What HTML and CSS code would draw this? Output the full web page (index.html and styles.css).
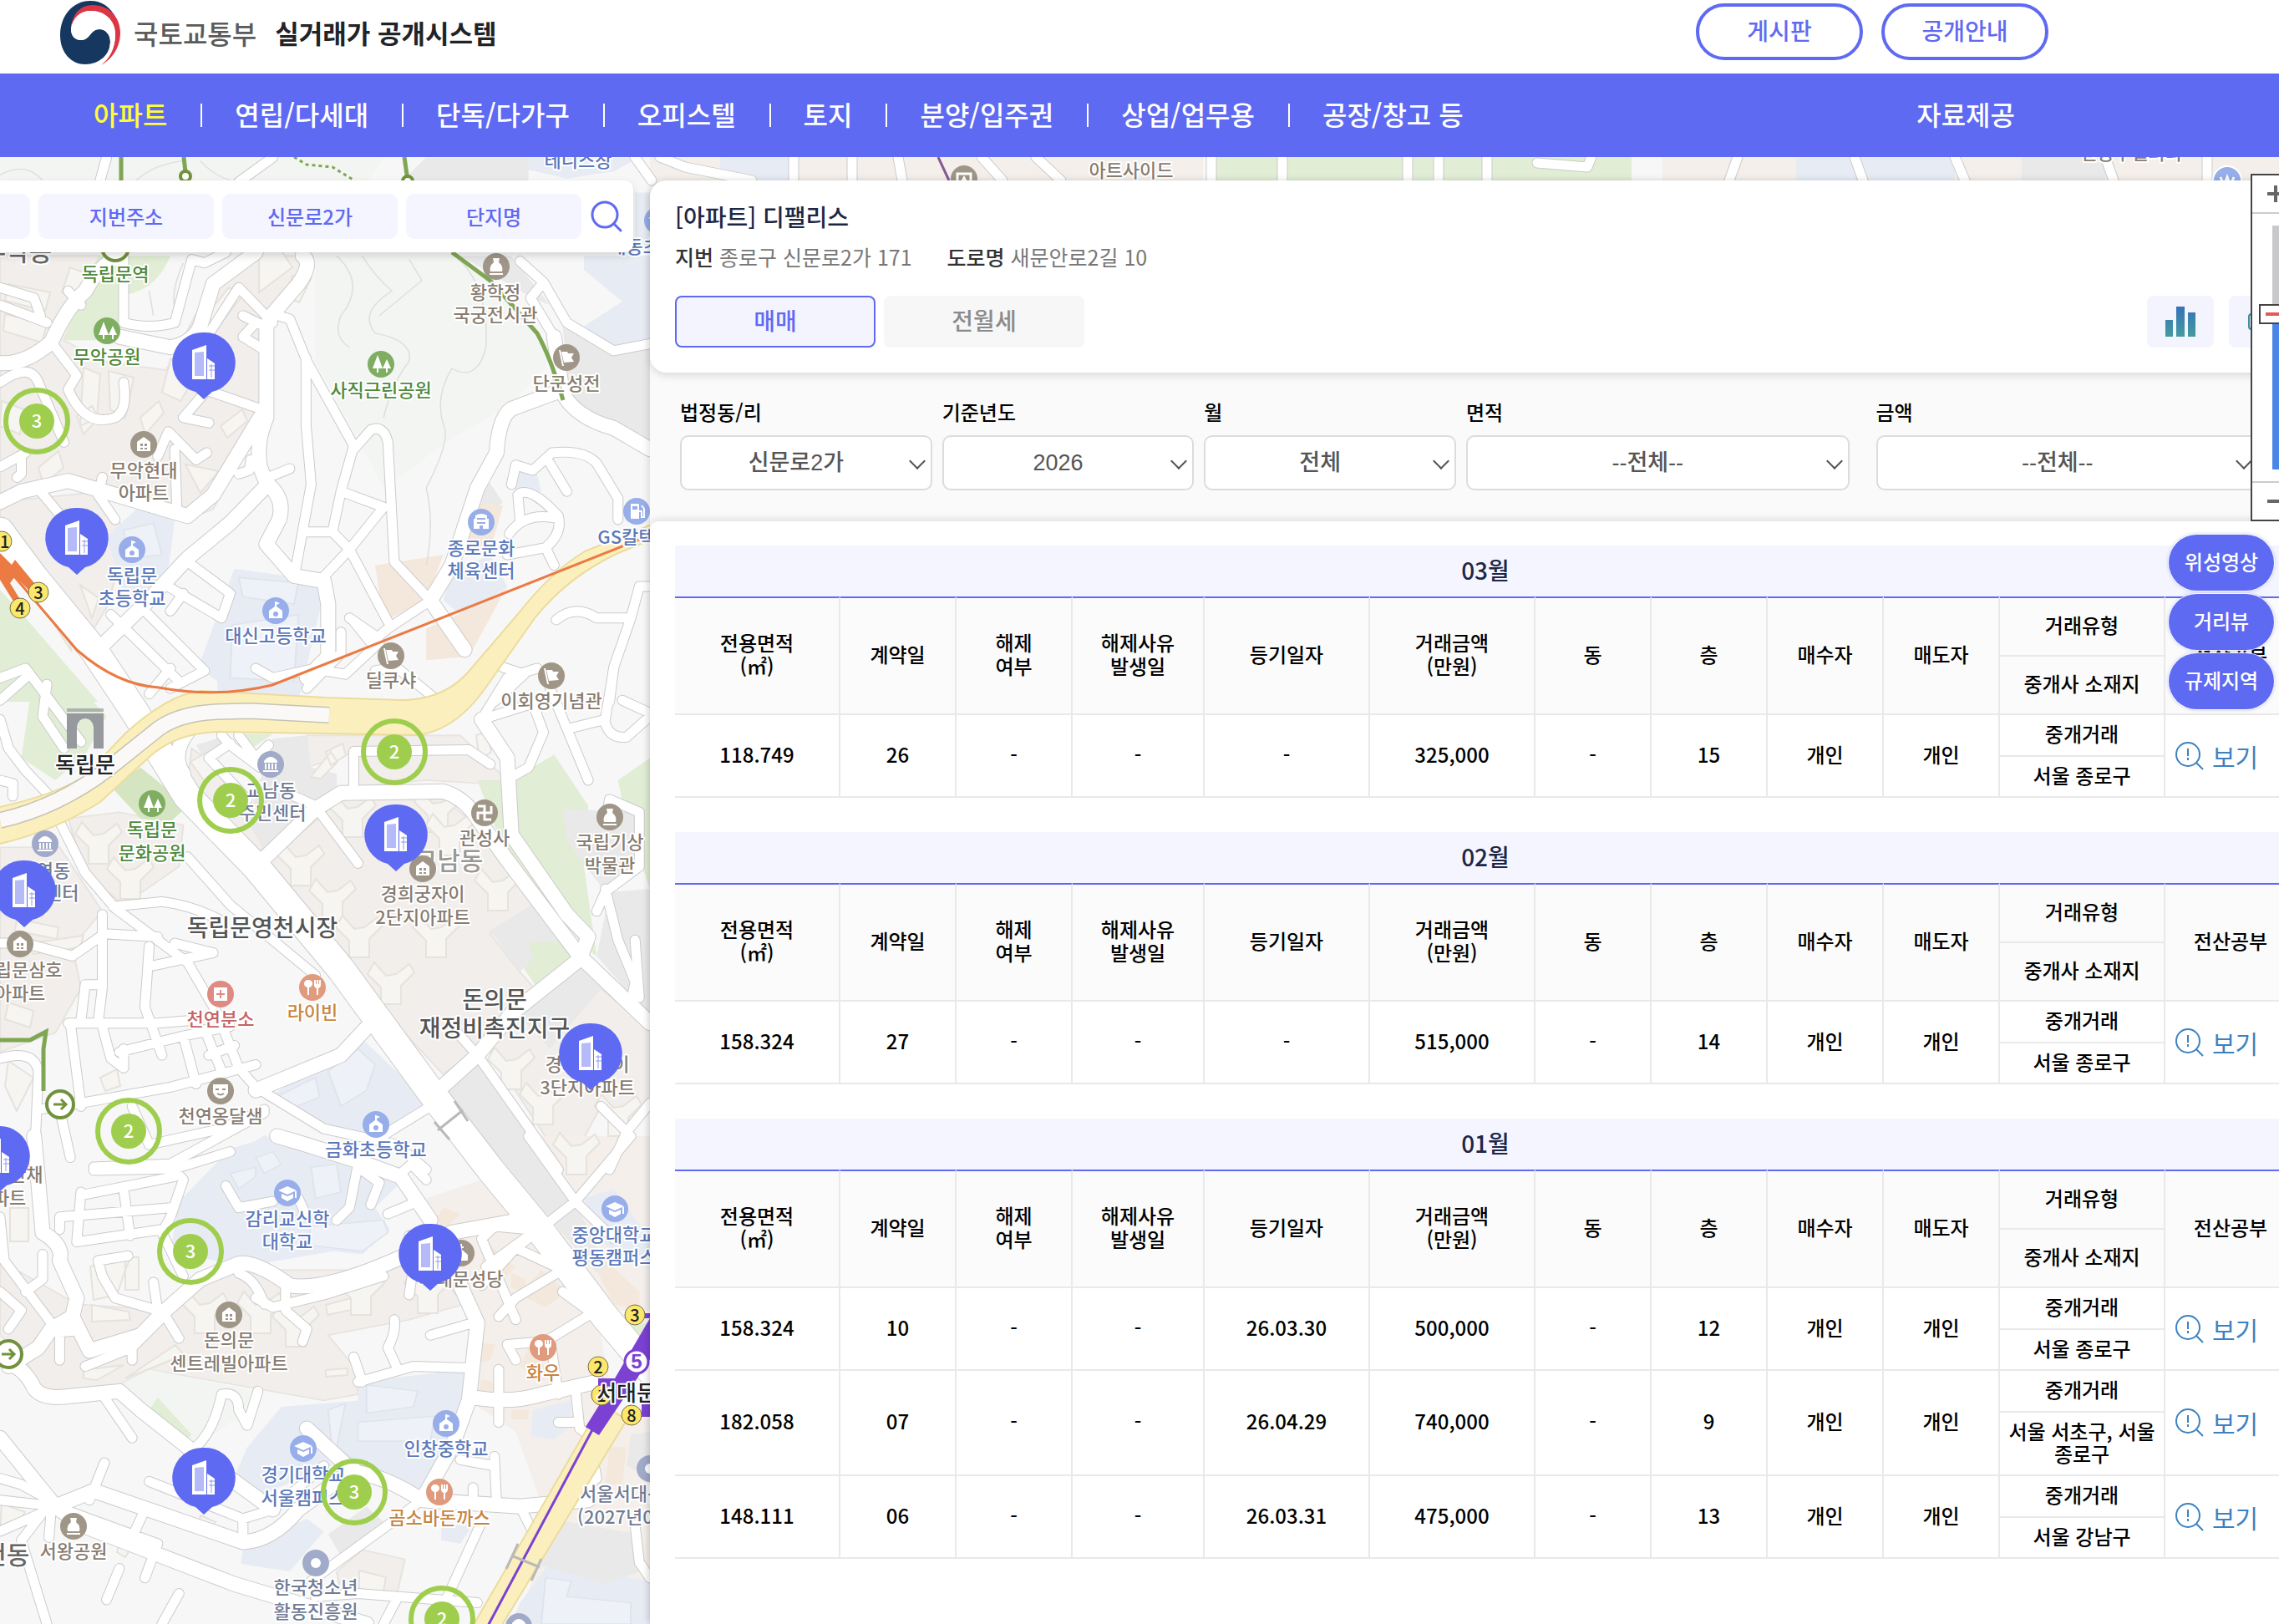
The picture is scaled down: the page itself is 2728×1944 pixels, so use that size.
FILE: index.html
```html
<!DOCTYPE html>
<html lang="ko">
<head>
<meta charset="utf-8">
<title>국토교통부 실거래가 공개시스템</title>
<link rel="stylesheet" href="styles.css">
</head>
<body>
<header class="top">
  <a class="brand" href="#">
    <svg class="brand-mark" viewBox="0 0 72 80" aria-hidden="true">
      <path fill="#163860" d="M67 23C60 9 50 2 36 2 15 2 0 20 0 43c0 22 14 35 30 35 17 0 30-12 30-27 0-9-6-15-13-15-11 0-11 13-22 13-8 0-12-6-12-13 0-12 10-25 25-27 14-1 22 5 29 14z"/>
      <path fill="#dc3545" d="M13 36C14 18 24 7 39 7 59 7 72 22 72 40 72 58 62 72 49 79 59 71 66 60 66 42 66 25 53 14 37 14 24 14 15 22 13 36Z"/>
      <path fill="#fff" d="M13 36C15 22 24 14 37 14 53 14 66 25 66 42 66 52 63 61 58 67L60 51C60 42 54 36 47 36 36 36 36 49 25 49 17 49 13 43 13 36Z"/>
    </svg>
    <span class="brand-org">국토교통부</span>
    <strong class="brand-name">실거래가 공개시스템</strong>
  </a>
  <div class="top-actions">
    <button class="outline-btn" type="button">게시판</button>
    <button class="outline-btn" type="button">공개안내</button>
  </div>
</header>
<nav class="gnb">
  <ul class="gnb-list">
    <li><a class="on" href="#">아파트</a></li>
    <li><a href="#">연립/다세대</a></li>
    <li><a href="#">단독/다가구</a></li>
    <li><a href="#">오피스텔</a></li>
    <li><a href="#">토지</a></li>
    <li><a href="#">분양/입주권</a></li>
    <li><a href="#">상업/업무용</a></li>
    <li><a href="#">공장/창고 등</a></li>
  </ul>
  <a class="gnb-data" href="#">자료제공</a>
</nav>

<main class="stage">
<svg class="map" viewBox="0 188 2728 1756" preserveAspectRatio="xMinYMin slice" role="img" aria-label="지도">
  <defs>
    <g id="streets">
      <g transform="translate(0 180) scale(.5102 .4209)">
        <path d="M250 20 235 85M640 20 560 90M640 465 680 480 720 600 830 840 800 970 780 1085M718 590V780L730 950 690 1215M830 850 870 795Q900 780 910 830L925 1170 1010 1280M800 970 900 1015 820 1135 750 1225M710 1085H780L820 1135 910 1340M1010 1280 910 1360 870 1400 830 1340M1220 315 1275 375 1330 490 1440 570 1525 550M1275 375 1245 420 1300 530M1200 950 1210 895 1250 910 1295 860Q1370 850 1400 890L1450 990V1050M1290 890 1330 970M1220 975Q1250 960 1310 1040 1320 1090 1280 1130L1190 1150M1215 980 1220 1050M1195 1090Q1230 1030 1300 1045M1280 1130 1300 1180M1305 1335Q1350 1290 1400 1330H1480L1500 1240H1525M1480 1330 1440 1470 1430 1568"/>
        <path d="M120 545 180 640 160 680Q200 790 270 760 300 740 290 660M0 660Q70 600 90 660L150 830M0 440 110 490M0 390 80 420 95 470M160 400 190 440M290 300V490Q350 510 410 490L450 310 480 320 530 290M640 490 560 390 480 540M570 470 620 500M600 490 570 530 610 560M480 680 610 735M480 690 430 760 490 775M0 900 60 860M50 870 50 920 40 930M240 930 230 980 270 1050M95 970 150 1050M370 870 395 800 460 880 485 860M410 850 415 1020M560 920 585 910 588 880M630 930 680 905M440 1170 540 1260 520 1330 380 1230M430 1260 400 1310M260 1320 420 1510M340 1310 480 1480 400 1530M800 1370V1430L720 1530M820 1330 880 1380M1180 1470 1230 1490 1160 1568M760 1480 810 1490 890 1400M880 1480 930 1470 1030 1568"/>
      </g>
      <g transform="translate(0 800) scale(.5102 .3827)">
        <path d="M0 160 20 250 60 320 110 390 140 480 200 640 270 750 440 920 510 1080 560 1250 600 1310 760 1440 930 1490 1000 1568M440 590 540 740 740 960M265 745 380 730Q450 740 520 790M830 380V260L1100 255 1150 300M750 450 840 610M690 400 740 430M520 210 540 240 610 310M540 235 490 280 580 410M560 210 600 280 630 240M1060 1120 1120 1210 1310 1568M1130 160 1250 110 1275 200 1240 310 1200 340M1290 60 1380 350M1330 190 1420 160 1440 0M1420 170Q1430 220 1470 215L1525 150M1460 100 1525 140M1430 410 1500 450V620L1420 700 1400 760M1430 410 1420 480M1420 690 1450 850 1490 980 1480 1050M1490 850 1500 1030M175 895 245 830 370 840M240 770V1000L230 1110M170 900 60 860H0M350 870 340 1060 380 1210M360 930 500 890 410 860M160 1110H370L460 1100M165 1110 190 1370M190 1100 200 990H240M190 1360 400 1310 600 1240M280 1200 430 1150 540 1120M290 1190V1250L260 1220 240 1120M430 1150 460 1300M480 1130 520 1260M490 1210 550 1180"/>
        <path d="M0 1220Q80 1190 90 1260L80 1568M140 1380 165 1530M90 1380 190 1360M310 1370 350 1490 520 1440 620 1380M220 1560 400 1550 620 1390M1010 1370 900 1460M1410 1370 1470 1450 1525 1360M1470 1450 1430 1568M0 30 60 0M110 50 100 150 150 250M60 0 190 230M0 100 60 30M1130 160 1190 30 1260 0M0 350 30 360V400M400 0 350 80M600 0 640 30 740 0"/>
      </g>
      <g transform="translate(0 1360) scale(.5102 .3724)">
        <path d="M220 110 410 105 540 50M410 110 430 140 400 260 380 310M190 190 410 130M190 180 180 340 380 300M140 300V260L400 230M290 170 305 320M600 520 640 550 760 510 900 450M670 490V560L720 620 710 660M560 440Q600 460 620 540M380 560 420 650M0 260 10 400 120 600M100 380V460L60 500M0 500 50 560 20 620M300 385 230 400 240 450 270 520 370 560M360 470 370 560M380 310 430 450M245 840 310 970M450 1010Q500 960 520 830 560 820 560 880L580 930 605 820M350 1110 570 1230 640 1200 760 1060M570 1230V1300M0 1100 50 1120 130 1180M0 1170 130 1190 370 1310M245 1050 210 1170M120 1200 115 1290M0 1270 100 1210M340 1200 310 1290M370 1310 340 1420M280 1390 250 1490M100 1210 50 1300 110 1568M420 1470 380 1568M140 720V630L190 625M200 740 310 680 390 570M310 660V720"/>
        <path d="M980 1180 890 1270 730 1430M840 790 970 740 1100 745M830 710 850 790M925 590Q930 630 910 680L930 740M1010 640 1110 600M740 1480 840 1470 1120 1500M1050 1480 1130 1240M900 1568 930 1490M840 90 820 230 790 270M840 100 890 150 870 220M940 120 965 90 1000 140M910 250 980 210M530 160 560 230 640 210M700 200 720 260M1240 0 1350 210 1440 330M1350 210 1480 0M1350 210 1210 360 1130 480M1240 300 1160 290 1130 330 1210 590M1170 580 1210 520 1320 430M1140 420 1240 320M1210 360 1320 430M1400 560 1280 660 1190 670 1210 720M1380 560 1320 500M1290 650 1310 830M1170 750V920M1350 810 1360 940 1390 970M1350 920H1310M1160 1030 1165 1180M1080 1040 1160 1060M1110 1130V1180M1220 1190 1260 1300M1380 960 1400 1100 1330 1180M1490 1250 1500 1370 1525 1420M960 320 970 420 960 510"/>
      </g>
      <path d="M760 188 780 216M790 188 820 200 900 216M950 188V216M1020 188V216M1075 188 1080 216M1175 188 1200 216M1240 188 1270 216M1450 188V216M1535 188V216M1685 188V216M1722 188V216M1780 188V216M1840 195 1900 200 1905 188M2080 188 2070 216M2220 188 2230 216M2340 188 2352 216M2520 188 2530 216M2642 188V216"/>
    </g>
    <g id="roads">
      <g transform="translate(0 180) scale(.5102 .4209)">
        <path d="M710 300Q735 320 700 380L640 465 625 500V760Q600 830 610 900L625 945Q670 990 655 1050L625 1120 690 1210 760 1225 770 1290V1440L720 1500M1300 690 1200 735Q1170 760 1165 860L1120 960 1060 1180 1010 1280 1090 1420M1300 530 1320 690Q1350 760 1440 790L1525 850M0 605Q60 610 120 545 160 440 200 400 230 330 280 300M280 530 400 560Q450 550 470 500L500 380 600 290M0 1000 50 970 160 940 440 1040 500 980 610 760M230 1420 340 1290 440 1160 540 1060 620 960"/>
      </g>
      <g transform="translate(0 800) scale(.5102 .3827)">
        <path d="M440 200Q400 270 430 330M600 620 740 440 800 390 1040 385Q1080 400 1110 450L1190 600 1360 900 1525 1110M1020 1330 1120 1210 1200 1080 1360 910 1380 840 1330 770 1200 520 1190 280 1130 160M600 1320 800 1210 870 1110"/>
      </g>
      <g transform="translate(0 1360) scale(.5102 .3724)">
        <path d="M80 0 90 150 100 310Q150 350 140 400L180 520 170 580 120 620 90 680 20 740M170 580 210 690 330 640 380 570 470 460 560 410Q600 400 680 480 760 500 940 390L1060 310 1220 270M20 730Q60 750 80 810 100 850 170 835L280 820 330 880 450 1010 640 1200M0 970 130 1190 220 1140 570 1305Q640 1300 700 1200L830 1070M130 1190 190 1250 550 1440 860 1568M720 940 830 1080Q900 1090 990 1170L1220 1190 1380 1170M990 1170 1060 1000 1100 850 1120 600 1080 480M1110 840Q1200 860 1270 830L1400 790M650 0 700 20 840 80 940 130 1010 270"/>
      </g>
    </g>
    <g id="avenues">
      <path d="M0 636 40 690 112 778 160 850 224 953 306 1037 408 1160 520 1313 587 1400 643 1468 724 1576 778 1640"/>
    </g>
    <path id="tower" d="M-20-26-6-10 6-12 22-24 28-14 12 2 12 24-12 24-12 4-28-12Z"/>
    <g id="poi-tree"><circle r="16" fill="#7fae62"/><path fill="#fff" d="M-4-11-10 5H-5V10H-3V5H2ZM7-6 2 5H6V10H8V5H12Z"/></g>
    <g id="poi-flag"><circle r="16" fill="#9f9687"/><path fill="#fff" d="M-9-9H-7L-3 10H-5ZM-6-7 1-7 2-5 9-5 6 0 9 5-3 6Z"/></g>
    <g id="poi-house"><circle r="16" fill="#9f9687"/><path fill="#fff" d="M0-9 8-3V8H-8V-3Z"/><path fill="#9f9687" d="M-4-1H-1V2H-4ZM1-1H4V2H1ZM-4 4H-1V6H-4ZM1 4H4V6H1Z"/></g>
    <g id="poi-vase"><circle r="16" fill="#9f9687"/><path fill="#fff" d="M-4-10H4L3-5Q9 0 7 6H-7Q-9 0-3-5ZM-8 8H8V10H-8Z"/></g>
    <g id="poi-school"><circle r="16" fill="#98aeea"/><path fill="#fff" d="M0-11 5-9 1-7V-5L8 0V9H-8V0L-1-5V-11Z"/><circle cy="4" r="3" fill="#98aeea"/></g>
    <g id="poi-cap"><circle r="16" fill="#98aeea"/><path fill="#fff" d="M0-8 11-3 0 2-11-3ZM-7 1 0 4 7 1V6L0 10-7 6ZM9-2H11V6H9Z"/></g>
    <g id="poi-hall"><circle r="16" fill="#a1abc9"/><path fill="#fff" d="M-8-4Q0-14 8-4V-2H-8ZM-7-1H-5V6H-7ZM-3-1H-1V6H-3ZM1-1H3V6H1ZM5-1H7V6H5ZM-9 7H9V9H-9Z"/></g>
    <g id="poi-food"><circle r="16" fill="#e09a7d"/><path fill="#fff" d="M-5-9A4 4 0 0 1-4 0V9H-6V0A4 4 0 0 1-5-9ZM2-9H4V-4H5V-9H7V-4H8V-9H10V-2Q9 1 7 1V9H5V1Q3 1 2-2Z"/></g>
    <g id="poi-plus"><circle r="16" fill="#dd8b83"/><path fill="#fff" d="M-8-8H8V8H-8Z"/><path fill="#dd8b83" d="M-1-5H1V-1H5V1H1V5H-1V1H-5V-1H-1Z"/></g>
    <g id="poi-mask"><circle r="16" fill="#9f9687"/><path fill="#fff" d="M-9-8H9V2Q6 9 0 9-6 9-9 2Z"/><path fill="none" stroke="#9f9687" stroke-width="2" d="M-6-2H-2M2-2H6M-4 3Q0 6 4 3"/></g>
    <g id="poi-fuel"><circle r="16" fill="#98aeea"/><path fill="#fff" d="M-7-9H3V9H-7Z"/><path fill="#98aeea" d="M-5-6H1V-2H-5Z"/><path fill="none" stroke="#fff" stroke-width="2" d="M3 0H6V7H9V-3L6-7"/></g>
    <g id="poi-sport"><circle r="16" fill="#98aeea"/><path fill="#fff" d="M-7-8Q0-12 7-8V-4H9V8H-9V-4H-7Z"/><path fill="#98aeea" d="M-5-5H5V-3H-5ZM-5 0H5V2H-5ZM-2 4H2V8H-2Z"/></g>
    <g id="poi-dot"><circle r="16" fill="#a1abc9"/><circle r="6" fill="#fff"/></g>
    <g id="poi-church"><circle r="16" fill="#9f9687"/><path fill="#fff" d="M-1-11H1V-8H3V-6H1V-4L8 2V9H-8V2L-1-4V-6H-3V-8H-1Z"/></g>
    <g id="poi-temple"><circle r="16" fill="#9f9687"/><path fill="none" stroke="#fff" stroke-width="3" d="M-8-8H0V8H8M8-8V0H-8V8"/></g>
    <g id="arrow-stop"><circle r="16" fill="#fff" stroke="#71913c" stroke-width="4"/><path fill="none" stroke="#71913c" stroke-width="3" d="M-8 0H7M1-6 7 0 1 6"/></g>
    <g id="pin">
      <path fill="#5f6af2" d="M0-36A36 36 0 0 1 10 35L0 44-10 35A36 36 0 0 1 0-36Z"/>
      <path fill="#fff" d="M-14-15 3-21V20H-14Z"/><path fill="#b5baf9" d="M-11-12 0-13V16H-11Z"/>
      <path fill="#fff" d="M4-5 13 1V20H4Z"/><path stroke="#8f97f6" d="M6 4H13M6 9H13M9 2V18"/>
    </g>
    <g id="cluster"><circle r="37" fill="none" stroke="#9fce4e" stroke-width="6"/><circle r="21" fill="#9fce4e"/></g>
  </defs>

  <rect y="188" width="2728" height="1756" fill="#f7f7f7"/>
  <g transform="translate(0 180) scale(.5102 .4209)">
    <path class="forest" d="M0 20H900L860 90H0ZM740 300H1080L1200 420 1290 600 1200 720 1060 820 900 960 830 800 740 600Z"/>
    <path class="estate" d="M0 300H240L150 540 240 600 390 625 480 420 560 300H710L730 360 640 470 620 760 500 1020 440 1050 160 940 0 980ZM0 1000 240 970 300 1100 250 1300 200 1400 0 1130Z"/>
    <path class="park" d="M230 300H400Q370 390 300 410V490L240 540H150L180 450ZM0 1250 60 1330 230 1568H0Z"/>
    <path class="campus" d="M1240 20H1500L1440 60 1330 80 1220 50ZM250 1100 320 1020 410 1050 400 1150 380 1280 290 1260ZM550 1190 730 1220 760 1260 700 1568H510V1510L465 1470ZM1370 300H1525V540L1450 570 1370 500 1460 430 1370 340ZM1490 120H1525V290H1490ZM1060 1200 1150 1150 1190 1240 1090 1330 1040 1280ZM1200 910 1260 920 1270 970 1210 980Z"/>
    <path class="campus-light" d="M545 1350 700 1320 690 1510 540 1500ZM560 1215 700 1230 690 1290 570 1270ZM290 1080 360 1060 380 1150 300 1160Z"/>
    <path class="block" d="M1000 20H1240V90H940ZM1080 300H1200L1290 440 1250 420ZM1320 500 1440 570 1525 560V850L1340 720ZM1140 930 1180 1000 1120 1060Z"/>
    <path class="shops" d="M880 1180 1040 1150 1000 1280 900 1340ZM1100 1000 1180 1010 1150 1140 1090 1150ZM1000 1360 1150 1280 1190 1240 1100 1440 1000 1450Z"/>
    <path class="contour" d="M790 300Q860 380 800 470 780 530 820 560M850 300Q880 360 920 400 840 460 880 520 970 540 960 600 920 660 900 760M1060 290Q1150 380 1140 560 1120 660 1060 620 1020 700 1040 780 1060 820 1000 960 1020 1060 1000 1180M960 310 990 370 890 470M350 400 360 470M430 320Q400 400 410 450M0 70Q60 30 100 85M320 85Q360 40 430 30M470 30Q500 70 540 85"/>
  </g>
  <g transform="translate(0 800) scale(.5102 .3827)">
    <path class="estate" d="M160 470 280 450 430 490 420 620 290 740 200 640ZM630 600 800 410H1040L1100 470 1260 730 1150 830 1220 950 1260 1010 1130 1180 1040 1270 800 930ZM720 210H1080L1190 350 1130 360 1000 350 840 370V260L720 310ZM1200 1090 1390 980 1525 1130V1350L1470 1440 1410 1370 1330 1568 1150 1200ZM0 560H140L240 760 170 870 190 1000 130 1140 0 1200ZM450 250 500 300 620 560 590 590 440 350Z"/>
    <path class="park" d="M0 0H150L250 150 200 270 130 350 50 280 70 100ZM1120 350H1200L1300 270 1380 430 1370 620 1400 900 1370 870 1180 560ZM1450 350 1525 280V690L1470 480ZM1240 850 1350 840 1360 910 1260 1000 1230 940ZM560 205H640L580 260Z"/>
    <path class="garden" d="M260 370 330 310 440 430 400 480 330 470Z"/>
    <path class="block" d="M1150 820 1260 730 1350 850 1240 860 1250 910 1220 950ZM640 220 720 210 730 310 790 330V390L740 430 620 560 580 480ZM1210 1070 1370 920 1430 970 1290 1190ZM1430 700 1525 690V1090L1400 900ZM1050 1280 1120 1220 1300 1568H1160L1030 1330ZM1320 440 1500 450 1490 640 1420 700 1330 540ZM460 240 520 215 540 250 480 290Z"/>
    <path class="campus" d="M620 1350 850 1160 1010 1360 900 1480 780 1450ZM500 1568 620 1460 760 1568Z"/>
    <path class="campus-light" d="M650 1340 740 1280 750 1340 680 1380ZM770 1260 840 1190 880 1240 860 1320 800 1370Z"/>
  </g>
  <g transform="translate(0 1360) scale(.5102 .3724)">
    <path class="estate" d="M0 400 180 540 380 560 480 450 600 430 900 430 1000 400 1090 540 960 590 770 640 830 740 840 830 760 850 350 750 280 800 100 820 60 720 0 640ZM850 1330 950 1360 930 1480 800 1470 790 1400Z"/>
    <path class="beige" d="M1000 200 1150 130 1240 280 1400 570 1430 790 1110 850 1120 600 1060 440ZM1110 860 1430 800 1380 960 1270 1180 1210 950ZM1380 960 1525 900V1568H1210ZM1260 0H1525V560L1440 560 1240 200Z"/>
    <path class="shops" d="M1040 230 1080 250 1050 290 1020 270ZM1150 350 1210 420 1180 460 1130 400ZM1270 430 1330 500 1280 550 1220 510ZM1200 440 1230 460 1240 500 1200 490ZM1110 660 1160 670 1150 720 1110 730ZM1240 680 1290 760 1270 790 1220 740ZM1370 350 1420 400 1500 500V560L1440 540ZM1130 780 1180 800 1160 850 1120 840ZM1430 1000 1470 1000 1460 1120 1420 1120ZM1340 1290 1440 1320 1390 1390 1320 1350ZM1200 880H1240V910H1200Z"/>
    <path class="campus" d="M640 0 840 90 940 150 880 230 915 300 850 380 780 370 570 420 400 370 420 210 540 40ZM840 790 1090 750V830L1050 1010 980 1160 860 1080 720 940 780 1060 580 1170 545 1110 580 1000 660 870 840 850ZM570 1320 720 1230 760 1270 680 1400 565 1375ZM1370 200 1440 170 1525 330V430L1420 350ZM1220 1500 1290 1370 1525 1430V1568H1200ZM1035 1250H1110L1080 1310 1035 1300ZM1250 880 1340 850V930L1300 975 1245 965Z"/>
    <path class="campus-light" d="M600 70 640 50 660 90 620 120ZM730 100 790 90 800 180 740 200ZM540 120 600 100 600 130 560 170ZM730 290 900 270 910 310 850 370 720 350ZM860 800 980 820 970 870 860 890ZM770 880 810 860 790 1000 830 1040 780 1020ZM840 920 1020 900 1010 980 840 980ZM1280 1420 1340 1430 1330 1480 1480 1500V1568H1270Z"/>
    <path class="forest" d="M280 800 350 750 600 820 560 900 450 1010Z"/>
    <path class="park" d="M370 840 450 960 430 985 350 880ZM1480 610 1520 600 1500 660Z"/>
    <path class="block" d="M770 1280 860 1190 900 1240 800 1350ZM1290 1230 1500 1280V1400L1420 1440 1270 1380ZM1480 960 1525 950V1100L1470 1060ZM1130 0H1230L1360 240 1420 420 1400 440 1200 120Z"/>
  </g>
  <path class="beige" d="M778 188H1440V216H778ZM1990 188H2728V216H1990Z"/>
  <path class="campus" d="M862 188H945V216H862ZM2150 188H2340V216H2150Z"/>
  <path class="block" d="M2420 188H2520V216H2420Z"/>
  <path class="park" d="M1456 188H1953V216H1456Z"/>
  <g class="bldg">
    <use href="#tower" x="118" y="1010"/><use href="#tower" x="156" y="1052"/><use href="#tower" x="360" y="1036"/><use href="#tower" x="422" y="978"/><use href="#tower" x="524" y="972"/><use href="#tower" x="398" y="1078"/><use href="#tower" x="430" y="1122"/><use href="#tower" x="522" y="1122"/><use href="#tower" x="596" y="1066"/><use href="#tower" x="468" y="1178"/><use href="#tower" x="538" y="1000"/><use href="#tower" x="612" y="1280"/><use href="#tower" x="650" y="1322"/><use href="#tower" x="690" y="1382"/><use href="#tower" x="740" y="1336"/><use href="#tower" x="245" y="1572"/><use href="#tower" x="312" y="1572"/><use href="#tower" x="354" y="1588"/><use href="#tower" x="432" y="1550"/><use href="#tower" x="512" y="1548"/>
    <path d="M10 340 60 350 54 372 6 360ZM84 320 110 330 96 360 74 350ZM6 376 56 388 50 410 4 396ZM310 300 330 290 350 320 310 350ZM350 330 372 334 358 362 344 356ZM100 440 120 448 116 500 96 510ZM130 444 160 452 150 500 132 490ZM92 498 110 486 118 500 100 520ZM204 430 240 440 216 480 194 470ZM168 500 190 480 196 494 174 520ZM264 510 290 490 296 504 272 524ZM222 556 262 564 240 590ZM240 386 274 344 290 354 252 404ZM46 560 70 540 76 560 52 580ZM2 480 28 490 24 520 0 510ZM48 690 70 720 86 780 60 740ZM96 700 118 716 110 740ZM20 1100 70 1110 68 1124 18 1114ZM30 1130 100 1120 96 1134 40 1142ZM10 1200 40 1210 36 1230 6 1220ZM10 1270 40 1290 20 1330 6 1300ZM120 1290 140 1280 144 1300 126 1306ZM390 900 410 890 414 904 396 916ZM570 880 584 876 588 900 574 910ZM228 912 248 900 262 920 244 934ZM108 1516 156 1506 150 1520 140 1550 112 1556ZM12 1446H34V1486H12ZM110 1562 154 1570 156 1580 110 1582ZM180 1630 210 1610 220 1622 150 1650ZM100 1640 148 1634 116 1652 100 1650ZM150 1505H166V1544H150ZM390 1562 420 1554V1568L392 1574ZM390 1640 416 1638V1646L390 1648ZM2 1800 30 1810 20 1826 0 1830ZM240 1814 258 1822 252 1832 238 1826ZM144 1844 158 1850 150 1864 140 1858ZM430 1880 462 1888 458 1910 430 1902ZM372 930 396 900 404 912 384 932Z"/>
  </g>

  <use href="#streets" class="casing casing-s"/><use href="#roads" class="casing casing-m"/><use href="#avenues" class="casing casing-l"/>
  <use href="#streets" class="lane lane-s"/><use href="#roads" class="lane lane-m"/><use href="#avenues" class="lane lane-l"/>

  <path class="arterial" d="M790 624 700 660Q660 684 620 735L560 805Q530 838 480 838L390 835 300 830 240 827Q200 832 150 878L100 930Q60 954-10 968V1012Q60 998 120 960L180 905Q210 878 260 876L390 878 500 880Q545 874 580 825L640 740Q680 690 740 662L790 642Z"/>
  <path class="tunnel-edge" d="M0 982Q70 966 130 920L190 872Q215 854 260 852L300 851 394 856"/>
  <path class="tunnel" d="M0 982Q70 966 130 920L190 872Q215 854 260 852L300 851 394 856"/>
  <path class="arterial" d="M720 1680 750 1700 598 1950H564Z"/>

  <path class="rail" d="M0 670 92 778Q140 820 190 823 260 836 326 820L790 636"/>
  <path fill="#eb7a43" d="M0 662 14 676 18 670 46 704 40 712 18 690 12 698 28 724 20 726 0 694Z"/>
  <path class="trail" d="M145 188V216M220 188 222 206M484 188 488 216M541 302 587 336 643 399Q660 430 674 479M0 1245H36L55 1235 52 1256V1306"/>
  <path class="trail-dots" d="M352 188 367 197 398 200 424 216"/>
  <g fill="#fff" stroke="#71913c" stroke-width="4"><circle cx="222" cy="211" r="6"/><circle cx="488" cy="217" r="6"/><circle cx="138" cy="296" r="16"/></g>
  <path stroke="#7b41d3" stroke-width="3" d="M712 1706 582 1950"/>
  <path fill="#7b41d3" d="M701 1708 717 1718 778 1627V1578L736 1650 716 1650V1658L731 1660ZM772 1572H778V1578H772ZM768 1680H778V1696H768Z"/>
  <path stroke="#b9b9b9" stroke-width="3" d="M520 1343 538 1364M524 1353 554 1329M544 1318 560 1342M606 1878 620 1848M612 1862 646 1876M636 1892 648 1866"/>
  <path stroke="#835a94" stroke-width="3" d="M1123 188 1136 216"/>
  <circle cx="1154" cy="214" r="16" fill="#9f9687"/><path fill="none" stroke="#fff" stroke-width="3" d="M1146 222V208H1162V222M1150 220 1154 213 1158 220"/>
  <circle cx="2666" cy="216" r="17" fill="#98aeea" stroke="#fff" stroke-width="2"/><path fill="none" stroke="#fff" stroke-width="3" d="M2658 212 2662 222 2666 212 2670 222 2674 212"/>
  <g transform="translate(102 872)" fill="#969a9f"><path d="M-22-18H22V24H10V-2Q8-12 0-12-8-12-10-2V24H-22Z"/><path d="M-22-24H22V-20H-22Z" opacity=".7"/></g>

  <g class="poi">
    <use href="#poi-tree" x="128" y="396"/><use href="#poi-tree" x="456" y="436"/><use href="#poi-tree" x="182" y="962"/>
    <use href="#poi-vase" x="594" y="319"/><use href="#poi-vase" x="730" y="978"/><use href="#poi-vase" x="88" y="1827"/>
    <use href="#poi-flag" x="678" y="428"/><use href="#poi-flag" x="468" y="785"/><use href="#poi-flag" x="660" y="809"/>
    <use href="#poi-house" x="172" y="532"/><use href="#poi-house" x="24" y="1130"/><use href="#poi-house" x="274" y="1574"/>
    <use href="#poi-sport" x="576" y="625"/><use href="#poi-fuel" x="762" y="612"/><use href="#poi-cap" x="787" y="264"/>
    <use href="#poi-school" x="158" y="658"/><use href="#poi-school" x="330" y="731"/><use href="#poi-school" x="450" y="1346"/><use href="#poi-school" x="534" y="1704"/>
    <use href="#poi-cap" x="344" y="1428"/><use href="#poi-cap" x="736" y="1447"/><use href="#poi-cap" x="363" y="1734"/>
    <use href="#poi-hall" x="324" y="915"/><use href="#poi-hall" x="54" y="1010"/>
    <use href="#poi-plus" x="264" y="1190"/><use href="#poi-mask" x="264" y="1306"/><use href="#poi-church" x="552" y="1500"/><use href="#poi-temple" x="580" y="973"/>
    <use href="#poi-food" x="374" y="1182"/><use href="#poi-food" x="650" y="1613"/><use href="#poi-food" x="526" y="1786"/>
    <use href="#poi-dot" x="378" y="1871"/><use href="#poi-dot" x="778" y="1758"/><use href="#poi-hall" x="621" y="1947"/>
  </g>
  <use href="#arrow-stop" x="72" y="1322"/><use href="#arrow-stop" x="10" y="1621"/>

  <g class="label">
    <g class="green"><text x="138" y="336">독립문역</text><text x="128" y="435">무악공원</text><text x="456" y="475">사직근린공원</text><text x="182" y="1001">독립문</text><text x="182" y="1029">문화공원</text></g>
    <g class="brown">
      <text x="172" y="571">무악현대</text><text x="172" y="598">아파트</text><text x="593" y="358">황학정</text><text x="593" y="385">국궁전시관</text><text x="678" y="467">단군성전</text>
      <text x="468" y="822">딜쿠샤</text><text x="660" y="847">이회영기념관</text><text x="580" y="1011">관성사</text><text x="730" y="1016">국립기상</text><text x="730" y="1044">박물관</text>
      <text x="24" y="1169">독립문삼호</text><text x="24" y="1197">아파트</text><text x="264" y="1344">천연옹달샘</text>
      <text x="703" y="1282">경희궁자이</text><text x="703" y="1310">3단지아파트</text><text x="1" y="1414">천연뜨란채</text><text x="1" y="1442">아파트</text>
      <text x="552" y="1539">서대문성당</text><text x="274" y="1612">돈의문</text><text x="274" y="1640">센트레빌아파트</text><text x="88" y="1865">서왕공원</text><text x="1354" y="212">아트사이드</text><text x="2551" y="191">인동주갤러리</text>
    </g>
    <g class="blue">
      <text x="692" y="200">테니스장</text><text x="790" y="303">매동초등학교</text><text x="576" y="664">종로문화</text><text x="576" y="691">체육센터</text><text x="760" y="651">GS칼텍스</text><text x="158" y="697">독립문</text><text x="158" y="724">초등학교</text><text x="330" y="769">대신고등학교</text>
      <text x="450" y="1384">금화초등학교</text><text x="344" y="1467">감리교신학</text><text x="344" y="1494">대학교</text><text x="735" y="1486">중앙대학교</text><text x="735" y="1513">평동캠퍼스</text><text x="534" y="1742">인창중학교</text><text x="363" y="1773">경기대학교</text><text x="363" y="1801">서울캠퍼스</text>
    </g>
    <g class="slate"><text x="324" y="954">교남동</text><text x="326" y="981">주민센터</text><text x="54" y="1050">천연동</text><text x="54" y="1077">주민센터</text><text x="378" y="1908">한국청소년</text><text x="378" y="1937">활동진흥원</text><text x="775" y="1796">서울서대문우체국</text><text x="777" y="1824">(2027년01월예정)</text></g>
    <g class="orange"><text x="374" y="1220">라이빈</text><text x="650" y="1651">화우</text><text x="526" y="1825">곰소바돈까스</text></g>
    <text class="red" x="264" y="1228">천연분소</text>
    <g class="district"><text class="faded" x="537" y="1041">교남동</text><text x="21" y="312">무악동</text><text x="-6" y="1872">냉천동</text></g>
    <g class="place"><text x="314" y="1121">독립문영천시장</text><text x="592" y="1207">돈의문</text><text x="592" y="1241">재정비촉진지구</text></g>
    <use href="#poi-house" x="506" y="1040"/>
    <g class="brown"><text x="506" y="1078">경희궁자이</text><text x="506" y="1106">2단지아파트</text></g>
    <text class="station" x="102" y="925">독립문</text>
  </g>
  <g class="exit">
    <circle cx="2" cy="648" r="12"/><circle cx="46" cy="709" r="12"/><circle cx="24" cy="728" r="12"/><circle cx="760" cy="1574" r="12"/><circle cx="716" cy="1636" r="12"/><circle cx="720" cy="1670" r="12"/><circle cx="756" cy="1694" r="12"/>
    <text x="2" y="656">-1</text><text x="46" y="717">3</text><text x="24" y="736">4</text><text x="760" y="1582">3</text><text x="716" y="1644">2</text><text x="720" y="1678">1</text><text x="756" y="1702">8</text>
  </g>
  <circle cx="762" cy="1630" r="14" fill="#fff" stroke="#7b41d3" stroke-width="3"/>
  <text class="line-no" x="762" y="1638">5</text>
  <g class="label"><text class="station" x="762" y="1677">서대문역</text></g>

  <g class="clusters">
    <use href="#cluster" x="44" y="504"/><use href="#cluster" x="276" y="958"/><use href="#cluster" x="472" y="900"/><use href="#cluster" x="154" y="1354"/><use href="#cluster" x="228" y="1498"/><use href="#cluster" x="424" y="1786"/><use href="#cluster" x="529" y="1938"/>
    <text x="44" y="512">3</text><text x="276" y="966">2</text><text x="472" y="908">2</text><text x="154" y="1362">2</text><text x="228" y="1506">3</text><text x="424" y="1794">3</text><text x="529" y="1946">2</text>
  </g>
  <use href="#pin" x="244" y="434"/><use href="#pin" x="92" y="644"/><use href="#pin" x="474" y="999"/><use href="#pin" x="29" y="1066"/><use href="#pin" x="707" y="1261"/><use href="#pin" x="-2" y="1384"/><use href="#pin" x="515" y="1501"/><use href="#pin" x="244" y="1769"/>
</svg>

<aside class="side">
  <form class="search">
    <button class="chip" type="button" aria-label="시도"></button>
    <button class="chip" type="button">지번주소</button>
    <button class="chip" type="button">신문로2가</button>
    <button class="chip" type="button">단지명</button>
    <button class="search-go" type="submit" aria-label="검색">
      <svg viewBox="0 0 40 40" width="40" height="40"><g fill="none" stroke="#5f6af2" stroke-width="3" stroke-linecap="round"><circle cx="18" cy="18" r="15"/><path d="M29 29 37 37"/></g></svg>
    </button>
  </form>
</aside>

<section class="panel">
  <header class="info">
    <h1 class="info-title">[아파트] 디팰리스</h1>
    <p class="info-addr"><span><b>지번</b> 종로구 신문로2가 171</span><span><b>도로명</b> 새문안로2길 10</span></p>
    <div class="info-row">
      <div class="tabs">
        <button class="tab on" type="button">매매</button>
        <button class="tab" type="button">전월세</button>
      </div>
      <div class="tools">
        <button class="tool" type="button" aria-label="그래프">
          <svg viewBox="0 0 80 62" width="80" height="62"><defs><linearGradient id="teal" x1="0" y1="0" x2="0" y2="1"><stop offset="0" stop-color="#3572b9"/><stop offset="1" stop-color="#469b9d"/></linearGradient></defs><path fill="url(#teal)" d="M22 29H31V49H22ZM35 13H45V49H35ZM49 20H58V49H49Z"/></svg>
        </button>
        <button class="tool" type="button" aria-label="인쇄">
          <svg viewBox="0 0 80 62" width="80" height="62"><g fill="none" stroke="#3c8fa8" stroke-width="2"><rect x="24" y="22" width="32" height="18" rx="3"/><path d="M30 22V14H50V22M30 34H50V48H30Z"/></g></svg>
        </button>
      </div>
    </div>
  </header>

  <form class="filters">
    <div class="field"><label for="dong">법정동/리</label><div class="select"><select id="dong"><option>신문로2가</option></select></div></div>
    <div class="field"><label for="year">기준년도</label><div class="select"><select id="year"><option>2026</option></select></div></div>
    <div class="field"><label for="month">월</label><div class="select"><select id="month"><option>전체</option></select></div></div>
    <div class="field wide"><label for="area">면적</label><div class="select"><select id="area"><option>--전체--</option></select></div></div>
    <div class="field wide last"><label for="price">금액</label><div class="select"><select id="price"><option>--전체--</option></select></div></div>
  </form>

  <div class="results">
    <svg width="0" height="0" class="sprite" aria-hidden="true"><symbol id="look" viewBox="0 0 34 34"><g fill="none" stroke="#3c82c0" stroke-width="2"><circle cx="15" cy="15" r="14"/><path d="M25 25 33 33M15 8V17M15 19V22"/></g></symbol></svg>
    <table class="deals">
      <caption>03월</caption>
      <colgroup><col class="w-l"><col class="w-s"><col class="w-s"><col class="w-m"><col class="w-l"><col class="w-l"><col class="w-s"><col class="w-s"><col class="w-s"><col class="w-s"><col class="w-l"><col></colgroup>
      <thead>
        <tr><th rowspan="2">전용면적<br>(㎡)</th><th rowspan="2">계약일</th><th rowspan="2">해제<br>여부</th><th rowspan="2">해제사유<br>발생일</th><th rowspan="2">등기일자</th><th rowspan="2">거래금액<br>(만원)</th><th rowspan="2">동</th><th rowspan="2">층</th><th rowspan="2">매수자</th><th rowspan="2">매도자</th><th>거래유형</th><th rowspan="2">전산공부</th></tr>
        <tr><th class="sub">중개사 소재지</th></tr>
      </thead>
      <tbody>
        <tr><td rowspan="2">118.749</td><td rowspan="2">26</td><td rowspan="2">-</td><td rowspan="2">-</td><td rowspan="2">-</td><td rowspan="2">325,000</td><td rowspan="2">-</td><td rowspan="2">15</td><td rowspan="2">개인</td><td rowspan="2">개인</td><td>중개거래</td><td rowspan="2"><a class="view" href="#"><svg width="34" height="34"><use href="#look"/></svg>보기</a></td></tr>
        <tr><td>서울 종로구</td></tr>
      </tbody>
    </table>
    <table class="deals">
      <caption>02월</caption>
      <colgroup><col class="w-l"><col class="w-s"><col class="w-s"><col class="w-m"><col class="w-l"><col class="w-l"><col class="w-s"><col class="w-s"><col class="w-s"><col class="w-s"><col class="w-l"><col></colgroup>
      <thead>
        <tr><th rowspan="2">전용면적<br>(㎡)</th><th rowspan="2">계약일</th><th rowspan="2">해제<br>여부</th><th rowspan="2">해제사유<br>발생일</th><th rowspan="2">등기일자</th><th rowspan="2">거래금액<br>(만원)</th><th rowspan="2">동</th><th rowspan="2">층</th><th rowspan="2">매수자</th><th rowspan="2">매도자</th><th>거래유형</th><th rowspan="2">전산공부</th></tr>
        <tr><th class="sub">중개사 소재지</th></tr>
      </thead>
      <tbody>
        <tr><td rowspan="2">158.324</td><td rowspan="2">27</td><td rowspan="2">-</td><td rowspan="2">-</td><td rowspan="2">-</td><td rowspan="2">515,000</td><td rowspan="2">-</td><td rowspan="2">14</td><td rowspan="2">개인</td><td rowspan="2">개인</td><td>중개거래</td><td rowspan="2"><a class="view" href="#"><svg width="34" height="34"><use href="#look"/></svg>보기</a></td></tr>
        <tr><td>서울 종로구</td></tr>
      </tbody>
    </table>
    <table class="deals">
      <caption>01월</caption>
      <colgroup><col class="w-l"><col class="w-s"><col class="w-s"><col class="w-m"><col class="w-l"><col class="w-l"><col class="w-s"><col class="w-s"><col class="w-s"><col class="w-s"><col class="w-l"><col></colgroup>
      <thead>
        <tr><th rowspan="2">전용면적<br>(㎡)</th><th rowspan="2">계약일</th><th rowspan="2">해제<br>여부</th><th rowspan="2">해제사유<br>발생일</th><th rowspan="2">등기일자</th><th rowspan="2">거래금액<br>(만원)</th><th rowspan="2">동</th><th rowspan="2">층</th><th rowspan="2">매수자</th><th rowspan="2">매도자</th><th>거래유형</th><th rowspan="2">전산공부</th></tr>
        <tr><th class="sub">중개사 소재지</th></tr>
      </thead>
      <tbody>
        <tr><td rowspan="2">158.324</td><td rowspan="2">10</td><td rowspan="2">-</td><td rowspan="2">-</td><td rowspan="2">26.03.30</td><td rowspan="2">500,000</td><td rowspan="2">-</td><td rowspan="2">12</td><td rowspan="2">개인</td><td rowspan="2">개인</td><td>중개거래</td><td rowspan="2"><a class="view" href="#"><svg width="34" height="34"><use href="#look"/></svg>보기</a></td></tr>
        <tr><td>서울 종로구</td></tr>
        <tr><td rowspan="2">182.058</td><td rowspan="2">07</td><td rowspan="2">-</td><td rowspan="2">-</td><td rowspan="2">26.04.29</td><td rowspan="2">740,000</td><td rowspan="2">-</td><td rowspan="2">9</td><td rowspan="2">개인</td><td rowspan="2">개인</td><td>중개거래</td><td rowspan="2"><a class="view" href="#"><svg width="34" height="34"><use href="#look"/></svg>보기</a></td></tr>
        <tr><td>서울 서초구, 서울 종로구</td></tr>
        <tr><td rowspan="2">148.111</td><td rowspan="2">06</td><td rowspan="2">-</td><td rowspan="2">-</td><td rowspan="2">26.03.31</td><td rowspan="2">475,000</td><td rowspan="2">-</td><td rowspan="2">13</td><td rowspan="2">개인</td><td rowspan="2">개인</td><td>중개거래</td><td rowspan="2"><a class="view" href="#"><svg width="34" height="34"><use href="#look"/></svg>보기</a></td></tr>
        <tr><td>서울 강남구</td></tr>
      </tbody>
    </table>
  </div>
</section>

<div class="zoom">
  <button class="zoom-btn plus" type="button" aria-label="확대"></button>
  <div class="zoom-track"><div class="zoom-fill"></div><div class="zoom-knob"></div></div>
  <button class="zoom-btn" type="button" aria-label="축소"></button>
</div>
<div class="layers">
  <button type="button">위성영상</button>
  <button type="button">거리뷰</button>
  <button type="button">규제지역</button>
</div>
</main>
</body>
</html>
```
FILE: styles.css
```css
* { box-sizing: border-box; }
body {
  margin: 0;
  min-height: 100vh;
  display: flex;
  flex-direction: column;
  overflow: hidden;
  background: #fff;
  color: #000;
  font: 500 24px/28px "Noto Sans CJK KR", "Noto Sans", sans-serif;
}
button, select { font: inherit; }
button { border: 0; padding: 0; cursor: pointer; }
a { color: inherit; text-decoration: none; }

.top { display: flex; justify-content: space-between; height: 88px; padding: 0 276px 0 72px; }
.brand { display: flex; align-items: center; height: 80px; padding-bottom: 2px; }
.brand-mark { width: 72px; height: 80px; }
.brand-org { margin-left: 16px; font-size: 32px; color: #5b5b5c; }
.brand-name { margin-left: 22px; font-size: 31px; font-weight: 700; color: #222327; }
.top-actions { display: flex; gap: 22px; padding-top: 4px; }
.outline-btn { width: 200px; height: 68px; padding-bottom: 4px; border: 4px solid #5f6af2; border-radius: 34px; background: #fff; color: #5f6af2; font-size: 28px; }

.gnb { display: flex; justify-content: space-between; align-items: center; height: 100px; padding: 0 276px 0 72px; background: #5f6af2; color: #fff; font-size: 32px; line-height: 40px; }
.gnb a { padding-bottom: 4px; }
.gnb-list { display: flex; margin: 0; padding: 0; list-style: none; }
.gnb-list li { display: flex; align-items: center; padding: 0 40px; }
.gnb-list li + li { padding-left: 0; }
.gnb-list li + li::before { content: ""; width: 2px; height: 28px; margin-right: 39px; background: #fff; }
.gnb a.on { color: #fffd38; }
.gnb a.gnb-data { padding: 0 40px 4px; }

.stage { position: relative; flex: 1; display: flex; overflow: hidden; }
.map { position: absolute; inset: 0; width: 100%; height: 100%; }

.forest { fill: #f2f5f1; }
.estate { fill: #f1eeeb; stroke: #e7e3de; stroke-width: 4; }
.park { fill: #e1edd4; }
.garden { fill: #d5e4c1; }
.campus { fill: #e7ecf4; }
.campus-light { fill: #eef2f8; stroke: #dfe4ec; stroke-width: 4; }
.block { fill: #e9e9e9; }
.beige { fill: #f4efea; }
.shops { fill: #f4e8dc; }
.contour { fill: none; stroke: #dedede; stroke-width: 3; }
.bldg { fill: #f7f5f2; stroke: #e6e2dc; stroke-width: 2; }
#streets path, #roads path, #avenues path { vector-effect: non-scaling-stroke; }
.casing, .lane { fill: none; stroke-linejoin: round; stroke-linecap: round; }
.casing { stroke: #cbcbcb; }
.lane { stroke: #fff; }
.casing-s { stroke-width: 13px; }
.lane-s { stroke-width: 11px; }
.casing-m { stroke-width: 19px; }
.lane-m { stroke-width: 17px; }
.casing-l { stroke-width: 35px; }
.lane-l { stroke-width: 33px; }
.arterial { fill: #fbf0bd; stroke: #ebdc9d; stroke-width: 2; }
.tunnel-edge { fill: none; stroke: #c6c2b6; stroke-width: 20; }
.tunnel { fill: none; stroke: #faf9f7; stroke-width: 17; }
.rail { fill: none; stroke: #eb7a43; stroke-width: 3; }
.trail { fill: none; stroke: #7fa653; stroke-width: 5; }
.trail-dots { fill: none; stroke: #7fa653; stroke-width: 3; stroke-dasharray: 4 4; }

.label text, .exit text, .clusters text, .line-no { text-anchor: middle; }
.label text { font-size: 22px; stroke: #fff; stroke-width: 4px; stroke-linejoin: round; paint-order: stroke; }
.label .green { fill: #4f8a3d; }
.label .brown { fill: #887c71; }
.label .blue { fill: #5c79bb; }
.label .slate { fill: #717b94; }
.label .orange { fill: #c7853f; }
.label .red { fill: #c56262; }
.label .district text { font-size: 30px; fill: #666; }
.label .district .faded { fill: #9b9793; }
.label .place text { font-size: 28px; fill: #545454; }
.label .station { font-size: 26px; fill: #222; }
.exit circle { fill: #fbe76b; stroke: #7a6f4a; stroke-width: 1; }
.exit text { font-size: 20px; fill: #222; }
.line-no { font: 700 24px "Liberation Sans", sans-serif; fill: #7b41d3; }
.clusters text { font-size: 22px; fill: #fff; }

.side { position: relative; flex: 0 0 778px; padding-top: 28px; }
.search { display: flex; align-items: flex-start; gap: 10px; width: 758px; height: 86px; padding-top: 16px; border-radius: 0 10px 10px 0; background: #fff; box-shadow: 0 4px 10px rgba(0, 0, 0, .15); }
.chip { flex: 0 0 210px; height: 54px; border-radius: 10px; background: #f4f5ff; color: #5f6af2; }
.chip:first-child { flex-basis: 36px; border-radius: 0 10px 10px 0; }
.search-go { display: flex; align-items: center; height: 54px; background: none; }

.panel { position: relative; flex: 1; min-width: 0; margin: 28px -50px 0 0; display: flex; flex-direction: column; border-radius: 20px 0 0 0; background: #fafafa; box-shadow: -2px 0 8px rgba(0, 0, 0, .12); }
.info { position: relative; height: 230px; padding: 24px 30px 0; border-radius: 20px 0 0 20px; background: #fff; box-shadow: 0 4px 10px rgba(0, 0, 0, .12); }
.info-title { margin: 0; font-size: 28px; line-height: 38px; font-weight: 500; color: #1c2745; }
.info-addr { display: flex; gap: 42px; margin: 10px 0 28px; font-size: 25px; line-height: 38px; font-weight: 400; color: #777; }
.info-addr b { font-weight: 500; color: #333; }
.info-row { display: flex; justify-content: space-between; }
.tabs { display: flex; gap: 10px; }
.tab { width: 240px; height: 62px; padding-bottom: 4px; border-radius: 8px; background: #f7f7f7; color: #8b8b8b; font-size: 28px; }
.tab.on { border: 2px solid #5f6af2; background: #f3f4fe; color: #5f6af2; }
.tools { display: flex; gap: 18px; }
.tool { width: 80px; height: 62px; border-radius: 8px; background: #f3f4fd; }
.tool svg { display: block; }

.filters { display: flex; gap: 12px; height: 178px; padding: 33px 74px 0 36px; }
.field { flex: 302; min-width: 0; }
.field.wide { flex: 459; }
.field.last { margin-left: 20px; }
.field label { display: block; margin-bottom: 14px; }
.select { position: relative; }
.select::after { content: ""; position: absolute; right: 11px; top: 24px; width: 12px; height: 12px; border: solid #555; border-width: 0 2px 2px 0; transform: rotate(45deg); pointer-events: none; }
select { appearance: none; display: block; width: 100%; height: 66px; padding: 0 24px 0 0; border: 2px solid #dcdcdc; border-radius: 10px; background: #fff; color: #555; font: 500 27px "Liberation Sans", "Noto Sans CJK KR", sans-serif; text-align: center; text-align-last: center; }

.results { flex: 1; padding: 29px 30px 0; border-radius: 10px 0 0 0; background: #fff; box-shadow: 0 -3px 8px rgba(0, 0, 0, .1); }
.sprite { position: absolute; }
.deals { width: 100%; table-layout: fixed; border-spacing: 0; margin-bottom: 41px; }
.deals caption { height: 61px; background: #f4f5ff; color: #1c2745; font-size: 28px; line-height: 58px; }
.w-l { width: 198px; }
.w-s { width: 139px; }
.w-m { width: 158px; }
.deals th, .deals td { padding: 0 8px 4px; border: solid #e9e9e9; border-width: 0 2px 2px 0; font-weight: 500; text-align: center; word-break: keep-all; height: 49px; }
.deals tr:nth-child(odd) td { height: 50px; }
.deals th:last-child:not(.sub), .deals td[rowspan]:last-child { border-right: 0; }
.deals th { height: 72px; background: #fbfbfb; border-top: 2px solid #5f6af2; }
.deals th.sub { height: 70px; border-top: 0; }
.deals td:only-child { padding: 8px 8px 12px; line-height: 27px; }
.deals td[rowspan]:last-child { padding: 0 8px; }
.view { display: flex; align-items: center; gap: 10px; padding-left: 4px; color: #3c82c0; font-size: 30px; font-weight: 400; }

.zoom { position: absolute; right: -26px; top: 20px; display: flex; flex-direction: column; width: 60px; height: 416px; border: 2px solid #444; background: #fff; }
.zoom-btn { position: relative; flex: 0 0 46px; background: #fff; border-top: 2px solid #ccc; }
.zoom-btn.plus { border-top: 0; border-bottom: 2px solid #ccc; }
.zoom-btn::before, .zoom-btn.plus::after { content: ""; position: absolute; left: 18px; top: 20px; width: 20px; height: 4px; background: #666; }
.zoom-btn.plus::after { left: 26px; top: 12px; width: 4px; height: 20px; }
.zoom-track { position: relative; flex: 1; margin: 14px 24px; background: #c9c9cc; }
.zoom-fill { position: absolute; inset: 110px 0 0; background: #4a86e8; }
.zoom-knob { position: absolute; top: 94px; left: -16px; width: 40px; height: 24px; border: 2px solid #444; background: linear-gradient(#e05a5a, #e05a5a) center / 24px 4px no-repeat #fff; }
.layers { position: absolute; right: 6px; top: 452px; display: flex; flex-direction: column; gap: 4px; }
.layers button { width: 126px; height: 67px; padding-bottom: 4px; border-radius: 34px; background: #5f6af2; color: #fff; box-shadow: 0 0 0 1px rgba(255, 255, 255, .8), 0 0 4px rgba(95, 106, 242, .5); }
```
